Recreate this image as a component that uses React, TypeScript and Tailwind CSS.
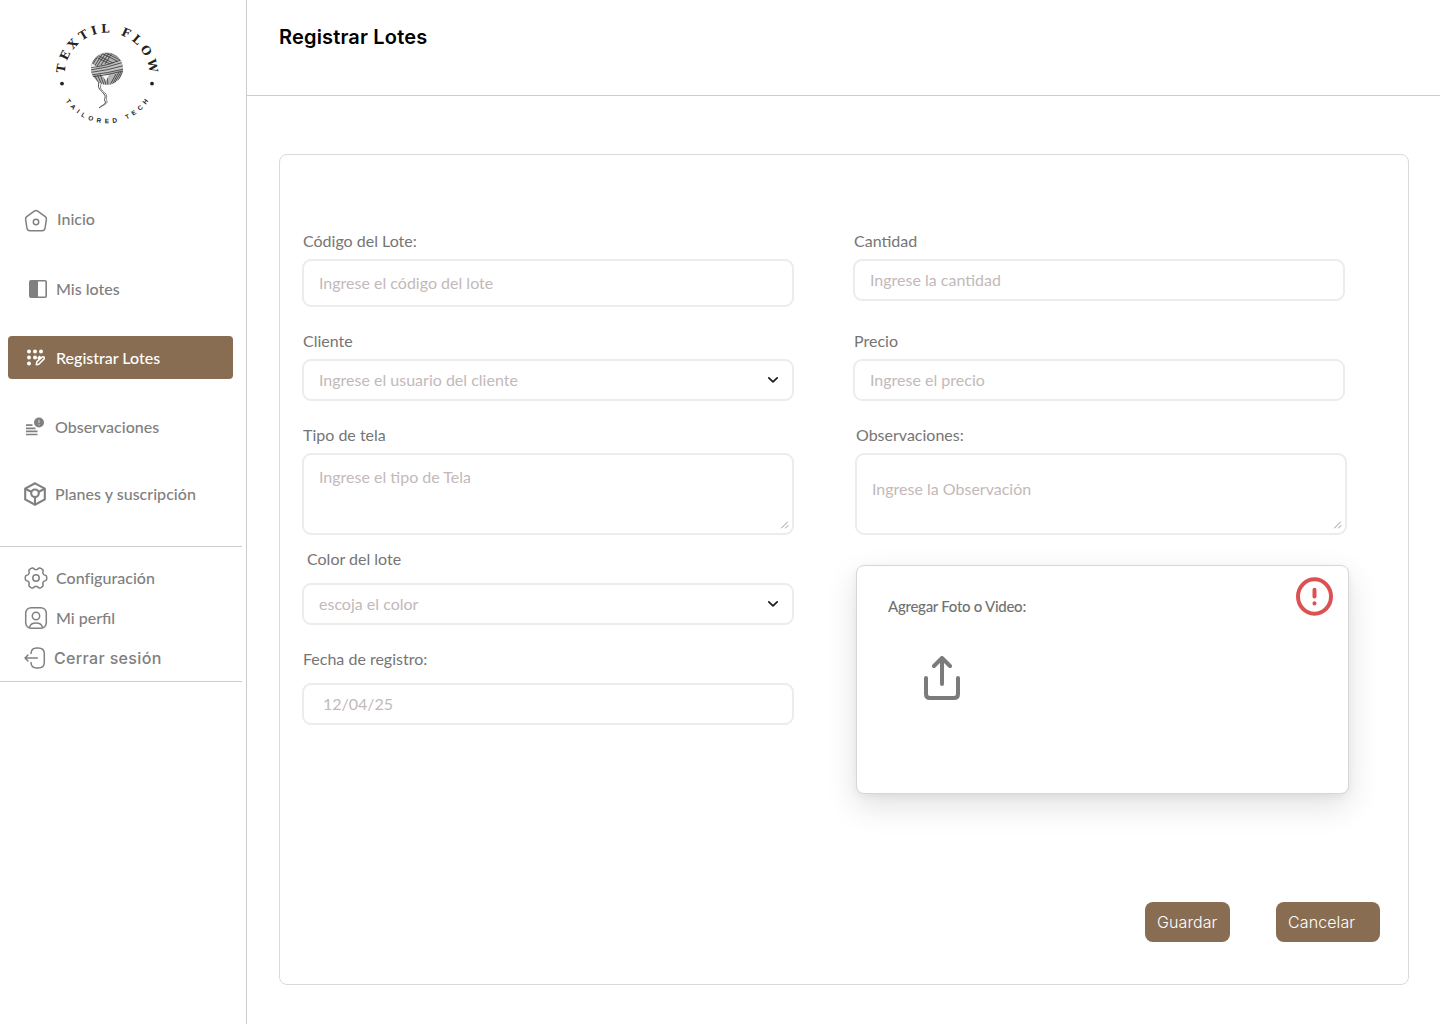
import React from "react";

const stroke = {
  fill: "none",
  stroke: "currentColor",
  strokeLinecap: "round" as const,
  strokeLinejoin: "round" as const,
};

function Logo() {
  return (
    <svg className="ml-[45px] mt-[15px] block" width="125" height="120" viewBox="45 15 125 120">
      <defs>
        <path id="arcTop" d="M65.9 85 A42.3 42.3 0 1 1 148.1 85" />
        <path id="arcBottom" d="M57.2 73.500 A49.800 49.800 0 0 0 156.800 73.500" />
        <clipPath id="ball"><circle cx="107" cy="69" r="16" /></clipPath>
      </defs>
      <text fontFamily="'DejaVu Serif', serif" fontWeight="700" fontSize="11.8" fill="#222" textAnchor="middle">
        <textPath href="#arcTop" startOffset="50%" textLength="129" lengthAdjust="spacing">TEXTIL FLOW</textPath>
      </text>
      <text fontFamily="'Liberation Sans', sans-serif" fontWeight="700" fontSize="6.4" fill="#222" textAnchor="middle">
        <textPath href="#arcBottom" startOffset="50%" textLength="98" lengthAdjust="spacing">TAILORED TECH</textPath>
      </text>
      <circle cx="62" cy="83.6" r="1.9" fill="#222" />
      <circle cx="152" cy="83.6" r="1.9" fill="#222" />
      <circle cx="107" cy="68.500" r="16" fill="#b4b4b4" />
      <g clipPath="url(#ball)" fill="none" stroke="#333" strokeWidth="0.8">
        <path d="M98 54l-8 12M100 53l-9 14M103 53l-9 14M106 53l-9 13M109 53l-8 12M112 53l-7 11" />
        <path d="M101 53l18 9M104 52l18 9M99 56l16 8M98 58l14 7M109 52l14 8" />
        <path d="M94 74l5 10M97 74l5 11M100 74l4 11M103 74l3 11M107 74l1 11M116 74l-6 11M119 72l-7 13M121 72l-7 12M123 71l-6 12" />
        <path d="M91 63l6 4-6 3zM101 74l8 1-3 6zM117 60l6 1 0 4z" fill="#f5f5f5" stroke="none" />
        <path d="M90 69q17-2 33-10v10q-16 5-32 7z" fill="#c4c4c4" stroke="none" />
        <path d="M90 68q17-2 34-9M90 70q17-2 34-8M90 72.500q17-2 34-7M91 75q17-2 33-6M91 77q17-2 32-6" />
      </g>
      <path d="M99 82c-2 7 2 8 5 12 3 4-1 5 1 7 2 3-3 4-6 7" fill="none" stroke="#333" strokeWidth="0.900" />
      <path d="M101 84c-2 5 2 7 5 10 2 3-1 5 1 7 1 3-4 4-8 7" fill="none" stroke="#666" strokeWidth="0.800" />
    </svg>
  );
}

function HomeIcon() {
  return (
    <svg width="24" height="24" viewBox="0 0 24 24" {...stroke} strokeWidth="1.500">
      <path d="M10.300 2.200 2.700 7.600Q1.300 8.700 1.600 10.400L3 19.300Q3.500 21.700 5.800 21.700H18.200Q20.500 21.700 21 19.300L22.400 10.400Q22.700 8.700 21.300 7.600L13.700 2.200Q12 1 10.300 2.200Z" />
      <circle cx="12" cy="13" r="2.700" />
    </svg>
  );
}

function PanelIcon() {
  return (
    <svg width="18" height="18" viewBox="0 0 18 18">
      <rect x="0.800" y="0.800" width="16.400" height="16.400" rx="1.200" fill="none" stroke="currentColor" strokeWidth="1.600" />
      <path d="M1 1h8v16H1z" fill="currentColor" />
    </svg>
  );
}

function RegisterIcon() {
  return (
    <svg width="20" height="20" viewBox="0 0 20 20" fill="currentColor">
      <circle cx="3" cy="3.500" r="2" />
      <circle cx="9" cy="3.500" r="2" />
      <circle cx="15" cy="3.500" r="2" />
      <circle cx="3" cy="9.500" r="2" />
      <circle cx="9" cy="9.500" r="2" />
      <circle cx="3" cy="15.500" r="2" />
      <path d="M10.800 13.900 16.300 8.900Q17.300 8.400 18 9.100T18.100 10.900L12.800 16.200 10.300 16.700Z" fill="none" stroke="currentColor" strokeWidth="1.500" strokeLinejoin="round" />
      <path d="M13.500 7.500 11 10 13 12 15.500 9.500Z" />
    </svg>
  );
}

function NoteAlertIcon() {
  return (
    <svg width="20" height="20" viewBox="0 0 20 20">
      <path d="M1 8.200h6.500M1 11.300h9.500M1 14.400h11.500M1 17.500h11.500" stroke="currentColor" strokeWidth="1.700" />
      <circle cx="14" cy="5.500" r="5" fill="currentColor" />
      <path d="M14 2.700v3.300M14 7.200v1.300" stroke="#fff" strokeOpacity="0.600" strokeWidth="1.100" />
    </svg>
  );
}

function CubeIcon() {
  return (
    <svg width="24" height="26" viewBox="0 0 24 26" {...stroke} strokeLinecap="butt" strokeLinejoin="miter" strokeWidth="2.100">
      <path d="M12 2.300 21.800 7.700V18.300L12 23.700 2.200 18.300V7.700Z" />
      <circle cx="12" cy="12.300" r="3.800" />
      <path d="M2.200 7.700 8.700 11M21.800 7.700 15.300 11M12 16V23.700" />
    </svg>
  );
}

const gearPath =
  Array.from({ length: 120 }, (_, i) => {
    const angle = (i / 120) * Math.PI * 2;
    const radius = 9.5 + 1.25 * Math.tanh(2 * Math.cos(6 * angle) + 0.5);
    const x = (12 + radius * Math.cos(angle)).toFixed(2);
    const y = (12 + radius * Math.sin(angle)).toFixed(2);
    return `${i === 0 ? "M" : "L"}${x} ${y}`;
  }).join("") + "Z";

function GearIcon() {
  return (
    <svg width="24" height="24" viewBox="0 0 24 24" {...stroke} strokeWidth="1.500">
      <path d={gearPath} />
      <circle cx="12" cy="12" r="3.200" />
    </svg>
  );
}

function ProfileIcon() {
  return (
    <svg width="24" height="24" viewBox="0 0 24 24" {...stroke} strokeWidth="1.500">
      <rect x="1.700" y="1.700" width="20.600" height="20.600" rx="5.500" />
      <circle cx="12" cy="10" r="3.700" />
      <path d="M5.500 21.500C6.500 15.500 17.500 15.500 18.500 21.500" />
    </svg>
  );
}

function LogoutIcon() {
  return (
    <svg width="24" height="24" viewBox="0 0 24 24" {...stroke} strokeWidth="1.500">
      <path d="M7 7.500C7.200 3.800 8.900 2 12.500 2H14C18.500 2 20.300 4 20.300 7.500V16.500C20.300 20 18.500 22 14 22H12.500C8.900 22 7.200 20.200 7 16.500" />
      <path d="M13.300 12H1.200M4 9 1 12 4 15" />
    </svg>
  );
}

function Chevron() {
  return (
    <svg width="12" height="8" viewBox="0 0 12 8" {...stroke} className="text-[#1c1c1c]" strokeWidth="1.700">
      <path d="M1.800 1.800 6 5.900 10.200 1.800" />
    </svg>
  );
}

function Grip() {
  return (
    <svg width="10" height="10" viewBox="0 0 10 10" {...stroke} className="mb-[3px] mr-[2px] self-end text-[#8a8a8a]" strokeWidth="0.900">
      <path d="M1.500 8 7.500 2M5.500 8 8 5.500" />
    </svg>
  );
}

function Label({ text, className = "" }: { text: string; className?: string }) {
  return <div className={`h-6 whitespace-nowrap pl-px text-base leading-6 text-[#757575] ${className}`}>{text}</div>;
}

function Box({ text, className, children }: { text: string; className: string; children?: React.ReactNode }) {
  return (
    <div className={`flex w-[492px] justify-between rounded-[9px] border-2 border-[#ececec] text-base leading-6 text-[#c3b9b9] ${className}`}>
      <span className="whitespace-nowrap">{text}</span>
      {children}
    </div>
  );
}

function Row({ icon, text, className }: { icon: React.ReactNode; text: string; className: string }) {
  return (
    <div className={`flex items-center whitespace-nowrap text-base leading-6 ${className}`}>
      <span className="flex w-6 shrink-0 justify-center">{icon}</span>
      <span>{text}</span>
    </div>
  );
}

export default function App() {
  return (
    <div className="flex h-[1024px] w-[1440px] overflow-hidden bg-white font-['Lato',sans-serif]">
      <aside className="flex w-[247px] shrink-0 flex-col border-r border-[#cdcdcd] text-[#808080]">
        <Logo />
        <nav className="mt-[72px] flex flex-col font-medium">
          <Row className="ml-6 h-6 gap-[9px]" icon={<span className="pt-1"><HomeIcon /></span>} text="Inicio" />
          <Row className="ml-[26px] mt-[46px] h-6 gap-[6px]" icon={<PanelIcon />} text="Mis lotes" />
          <Row className="ml-2 mt-[35px] h-[43px] w-[225px] gap-2 rounded bg-[#886d53] pl-4 text-white" icon={<RegisterIcon />} text="Registrar Lotes" />
          <Row className="ml-6 mt-[36px] h-6 gap-[7px]" icon={<span className="-ml-[2px]"><NoteAlertIcon /></span>} text="Observaciones" />
          <Row className="ml-[23px] mt-[43px] h-6 gap-2 tracking-[0.03px]" icon={<CubeIcon />} text="Planes y suscripción" />
        </nav>
        <div className="mt-[40px] flex h-[136px] w-[242px] flex-col gap-4 border-y border-[#cdcdcd] pl-6 pt-[19px] font-medium">
          <Row className="h-6 gap-2 tracking-[0.03px]" icon={<GearIcon />} text="Configuración" />
          <Row className="h-6 gap-2" icon={<ProfileIcon />} text="Mi perfil" />
          <Row className="h-6 gap-[6px] font-['Inter',sans-serif] tracking-[0.35px]" icon={<LogoutIcon />} text="Cerrar sesión" />
        </div>
      </aside>
      <main className="flex grow flex-col">
        <header className="h-24 border-b border-[#cdcdcd] pl-8 pt-[23px]">
          <h1 className="font-['Inter',sans-serif] text-[20px] font-semibold leading-7 tracking-[0.17px] text-black">Registrar Lotes</h1>
        </header>
        <section className="ml-8 mt-[58px] flex h-[831px] w-[1130px] flex-col rounded-lg border border-[#d9d9d9]">
          <div className="flex h-[640px] gap-[59px] pl-[22px] pt-[74px]">
            <div className="flex w-[492px] flex-col">
              <Label text="Código del Lote:" />
              <Box text="Ingrese el código del lote" className="mt-[6px] h-12 items-center pl-[15px]" />
              <Label text="Cliente" className="mt-[22px]" />
              <Box text="Ingrese el usuario del cliente" className="mt-[6px] h-[42px] items-center pl-[15px] pr-[13px]"><Chevron /></Box>
              <Label text="Tipo de tela" className="mt-[22px]" />
              <Box text="Ingrese el tipo de Tela" className="mt-[6px] h-[82px] pl-[15px] pt-[10px]"><Grip /></Box>
              <Label text="Color del lote" className="ml-1 mt-3" />
              <Box text="escoja el color" className="mt-3 h-[42px] items-center pl-[15px] pr-[13px]"><Chevron /></Box>
              <Label text="Fecha de registro:" className="mt-[22px]" />
              <Box text="12/04/25" className="mt-3 h-[42px] items-center pl-[19px]" />
            </div>
            <div className="flex w-[498px] flex-col">
              <Label text="Cantidad" />
              <Box text="Ingrese la cantidad" className="mt-[6px] h-[42px] items-center pl-[15px]" />
              <Label text="Precio" className="mt-7" />
              <Box text="Ingrese el precio" className="mt-[6px] h-[42px] items-center pl-[15px]" />
              <Label text="Observaciones:" className="ml-[2px] mt-[22px]" />
              <Box text="Ingrese la Observación" className="ml-[2px] mt-[6px] h-[82px] pl-[15px] pt-[22px]"><Grip /></Box>
              <div className="ml-[3px] mt-[30px] flex h-[229px] w-[493px] shrink-0 justify-between rounded-lg border border-[#d6d6d6] bg-white shadow-[0_12px_32px_rgba(0,0,0,0.12),0_3px_8px_rgba(0,0,0,0.05)]">
                <div className="pl-[31px] pt-[28px] text-[#7b7b7b]">
                  <div className="text-[15px] font-medium leading-6 tracking-[-0.28px] text-[#717171]">Agregar Foto o Video:</div>
                  <svg className="ml-9 mt-[38px]" width="36" height="44" viewBox="0 0 36 44" {...stroke} strokeWidth="4">
                    <path d="M2 22V38Q2 42 6 42H30Q34 42 34 38V22M18 28V2M10 10 18 2 26 10" />
                  </svg>
                </div>
                <svg className="mr-[14px] mt-[11px]" width="38" height="40" viewBox="0 0 38 40" {...stroke} stroke="#dc5252" strokeWidth="4">
                  <ellipse cx="18.500" cy="19.500" rx="16.500" ry="17.300" />
                  <path d="M18.500 12.800V19.500M18.500 26.300V26.400" />
                </svg>
              </div>
            </div>
          </div>
          <div className="mt-[107px] flex gap-[46px] pl-[865px] font-['Inter',sans-serif] text-base font-light tracking-[0.1px] text-white">
            <button className="h-10 w-[85px] rounded-lg bg-[#886d53] pl-3 text-left">Guardar</button>
            <button className="h-10 w-[104px] rounded-lg bg-[#886d53] pl-3 text-left">Cancelar</button>
          </div>
        </section>
      </main>
    </div>
  );
}
